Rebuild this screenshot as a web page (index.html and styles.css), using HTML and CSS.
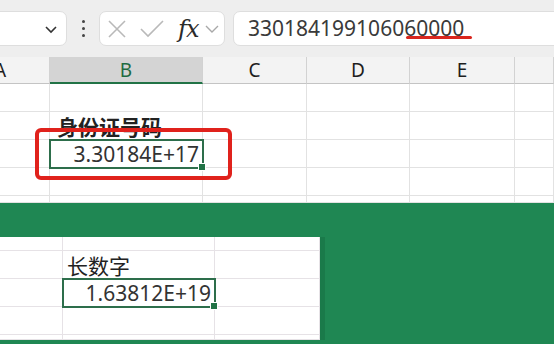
FILE: index.html
```html
<!DOCTYPE html>
<html lang="zh-CN">
<head>
  <meta charset="UTF-8">
  <title>身份证号码 - 长数字</title>
  <link rel="stylesheet" href="styles.css">
</head>
<body>
  <div class="toolbar">
    <div class="name-box">
      <svg class="chev" width="14" height="10" viewBox="0 0 14 10"><polyline points="2,3 7,8 12,3" fill="none" stroke="#333" stroke-width="1.6"/></svg>
    </div>
    <div class="dots"><span></span><span></span><span></span></div>
    <div class="fx-group">
      <svg width="20" height="20" viewBox="0 0 20 20"><path d="M2 2 L18 18 M18 2 L2 18" stroke="#b9b9b9" stroke-width="1.6" fill="none"/></svg>
      <svg width="26" height="20" viewBox="0 0 26 20"><polyline points="2,10 9,17 24,2" fill="none" stroke="#b9b9b9" stroke-width="1.6"/></svg>
      <span class="fx">fx</span>
      <svg width="14" height="10" viewBox="0 0 14 10"><polyline points="1,2 7,8 13,2" fill="none" stroke="#a8a8a8" stroke-width="1.4"/></svg>
    </div>
    <div class="formula">3301841991060<span class="mark">60000</span></div>
  </div>

  <div class="sheet">
    <div class="col-head">A</div>
    <div class="col-head active">B</div>
    <div class="col-head">C</div>
    <div class="col-head">D</div>
    <div class="col-head">E</div>
    <div class="col-head"></div>

    <div class="cell"></div><div class="cell"></div><div class="cell"></div><div class="cell"></div><div class="cell"></div><div class="cell"></div>
    <div class="cell"></div><div class="cell label bold">身份证号码</div><div class="cell"></div><div class="cell"></div><div class="cell"></div><div class="cell"></div>
    <div class="cell"></div><div class="cell num selected">3.30184E+17</div><div class="cell"></div><div class="cell"></div><div class="cell"></div><div class="cell"></div>
    <div class="cell"></div><div class="cell"></div><div class="cell"></div><div class="cell"></div><div class="cell"></div><div class="cell"></div>
    <div class="cell"></div><div class="cell"></div><div class="cell"></div><div class="cell"></div><div class="cell"></div><div class="cell"></div>

    <div class="highlight"></div>
  </div>

  <div class="green">
    <div class="panel">
      <div class="cell"></div><div class="cell"></div><div class="cell"></div><div class="cell"></div>
      <div class="cell"></div><div class="cell label">长数字</div><div class="cell"></div><div class="cell"></div>
      <div class="cell"></div><div class="cell num selected">1.63812E+19</div><div class="cell"></div><div class="cell"></div>
      <div class="cell"></div><div class="cell"></div><div class="cell"></div><div class="cell"></div>
      <div class="cell"></div><div class="cell"></div><div class="cell"></div><div class="cell"></div>
    </div>
  </div>
</body>
</html>
```

FILE: styles.css
```css
body {
  margin: 0;
  width: 554px;
  height: 344px;
  overflow: hidden;
  font-family: "Noto Sans", "Noto Sans CJK SC", sans-serif;
  color: #333;
  background: #fff;
}
.toolbar {
  display: flex;
  align-items: center;
  height: 57px;
  background: #eeeeee;
}
.name-box, .fx-group, .formula {
  height: 35px;
  box-sizing: border-box;
  background: #fff;
  border: 1px solid #dedede;
  border-radius: 7px;
}
.name-box {
  width: 77px;
  margin-left: -10px;
  display: flex;
  align-items: center;
  justify-content: flex-end;
  padding-right: 8px;
}
.dots {
  width: 32px;
  display: flex;
  flex-direction: column;
  align-items: center;
  gap: 4px;
}
.dots span {
  width: 3px;
  height: 3px;
  border-radius: 50%;
  background: #444;
}
.fx-group {
  width: 126px;
  display: flex;
  align-items: center;
  padding-left: 7px;
  gap: 12px;
}
.fx {
  font-family: "DejaVu Serif", serif;
  font-style: italic;
  font-size: 24px;
  color: #2a2a2a;
  margin-left: 1px;
  margin-right: -5px;
  line-height: 1;
  letter-spacing: -1px;
}
.formula {
  flex: 1;
  margin-left: 8px;
  margin-right: -10px;
  padding-left: 14px;
  font-size: 21px;
  line-height: 33px;
  color: #3a3a3a;
  white-space: nowrap;
}
.mark {
  position: relative;
}
.mark::after {
  content: "";
  position: absolute;
  left: 2px;
  right: -8px;
  bottom: 3px;
  height: 3px;
  border-radius: 2px;
  background: #d9261e;
}
.sheet {
  position: relative;
  display: grid;
  grid-template-columns: 50px 153px 104px 103px 105px 1fr;
  grid-template-rows: 27px 28px 28px 28px 28px 7px;
  height: 146px;
  overflow: hidden;
}
.col-head {
  background: #f3f3f3;
  border-bottom: 1px solid #c4c4c4;
  border-right: 1px solid #d2d2d2;
  font-size: 19px;
  color: #1e1e1e;
  display: flex;
  align-items: center;
  justify-content: center;
}
.col-head:first-child {
  justify-content: flex-start;
  margin-left: -6px;
}
.col-head.active {
  background: #d4d4d4;
  color: #1f6b42;
  border-bottom: 2px solid #217346;
}
.cell {
  border-right: 1px solid #e2e2e2;
  border-bottom: 1px solid #e2e2e2;
  box-sizing: border-box;
  position: relative;
}
.label {
  display: flex;
  align-items: flex-end;
  padding-left: 7px;
  font-size: 21px;
  line-height: 24px;
  color: #222;
  white-space: nowrap;
}
.bold {
  font-weight: bold;
}
.num {
  display: flex;
  align-items: center;
  justify-content: flex-end;
  padding-right: 3px;
  font-size: 21px;
  color: #333;
}
.selected {
  outline: 2px solid #2d6e4b;
  outline-offset: -1px;
  z-index: 1;
}
.selected::after {
  content: "";
  position: absolute;
  right: -4px;
  bottom: -4px;
  width: 6px;
  height: 6px;
  background: #217346;
  border: 1px solid #fff;
}
.highlight {
  position: absolute;
  left: 35px;
  top: 71px;
  width: 197px;
  height: 52px;
  box-sizing: border-box;
  border: 4px solid #e0221c;
  border-radius: 6px;
  z-index: 2;
}
.green {
  height: 141px;
  background: #1f8753;
  padding-top: 34px;
  box-sizing: border-box;
}
.panel {
  width: 325px;
  height: 103px;
  background: #fff;
  border-right: 5px solid #1a7a4a;
  box-sizing: border-box;
  display: grid;
  grid-template-columns: 63px 152px 105px 1fr;
  grid-template-rows: 14px 28px 28px 28px 5px;
  overflow: hidden;
}
.panel .cell {
  border-color: #e6e2e6;
}
.panel .label {
  padding-left: 4px;
  font-weight: normal;
}
```
